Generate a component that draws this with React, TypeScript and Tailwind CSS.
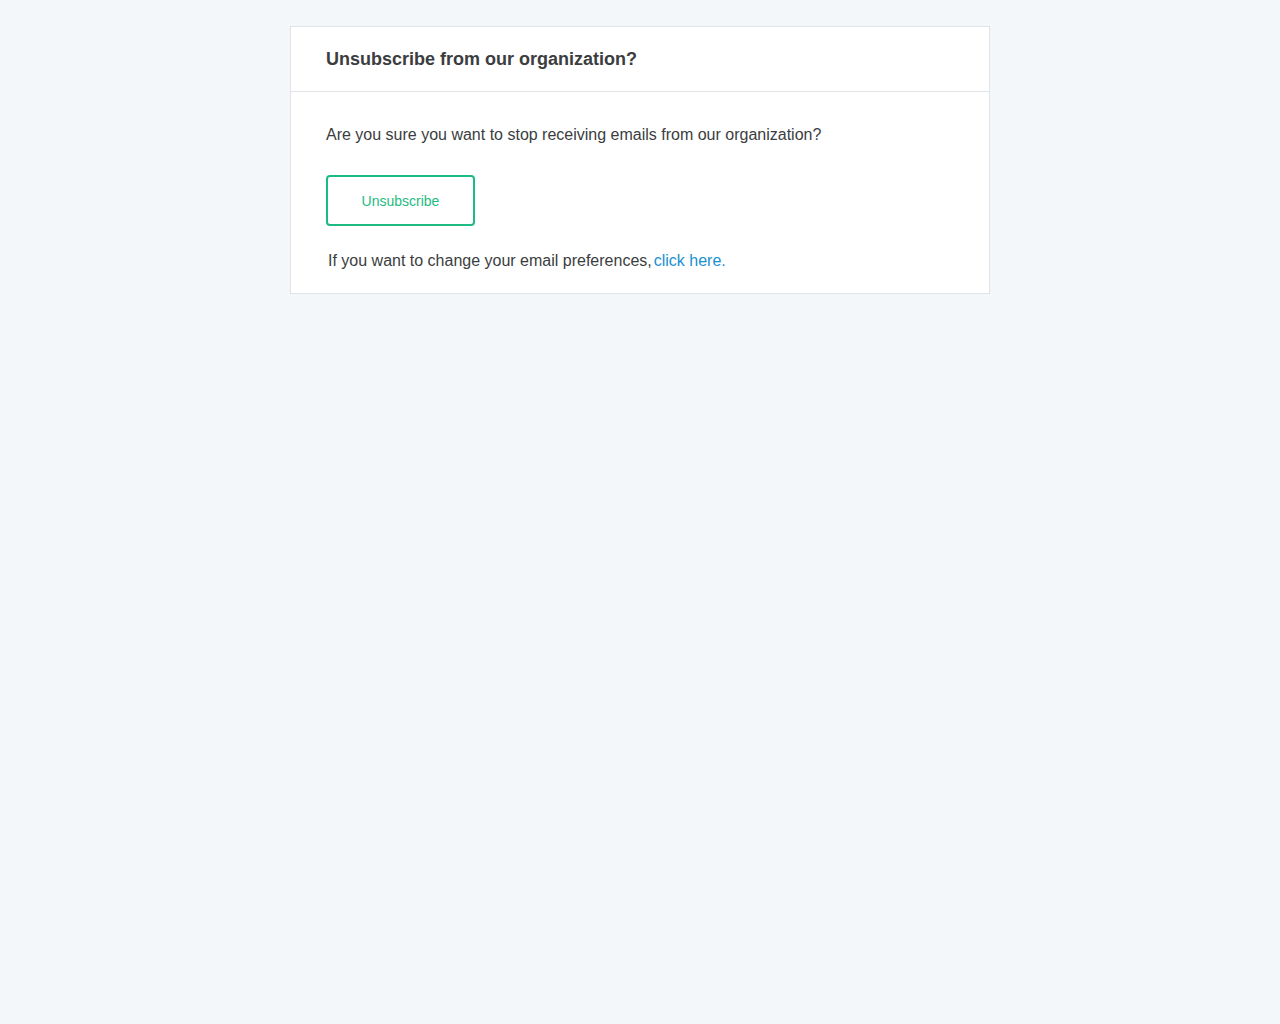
import React from 'react';

const App: React.FC = () => {
  return (
    <div className="min-h-screen bg-[#f3f7fa] pt-[26px] font-['Liberation_Sans',Arial,sans-serif] text-[#3b3d40]">
      <div className="w-[700px] mx-auto bg-white border border-[#e1e3e6]">
        <div className="px-[35px] py-[20px] border-b border-[#e1e3e6]">
          <h1 className="text-[18px] leading-[24px] font-bold">Unsubscribe from our organization?</h1>
        </div>
        <div className="px-[35px] pt-[31px] pb-[20px]">
          <p className="text-[16px] leading-[24px]">
            Are you sure you want to stop receiving emails from our organization?
          </p>
          <button className="mt-[28px] w-[149px] h-[51px] pt-[2px] rounded-[4px] border-2 border-[#1dbb82] text-[14px] text-[#1dbb82] bg-white">
            Unsubscribe
          </button>
          <p className="mt-[23px] ml-[2px] text-[16px] leading-[24px]">
            If you want to change your email preferences,
            <a href="#" className="ml-[2px] text-[#1a8fd0]">click here.</a>
          </p>
        </div>
      </div>
    </div>
  );
};

export default App;
